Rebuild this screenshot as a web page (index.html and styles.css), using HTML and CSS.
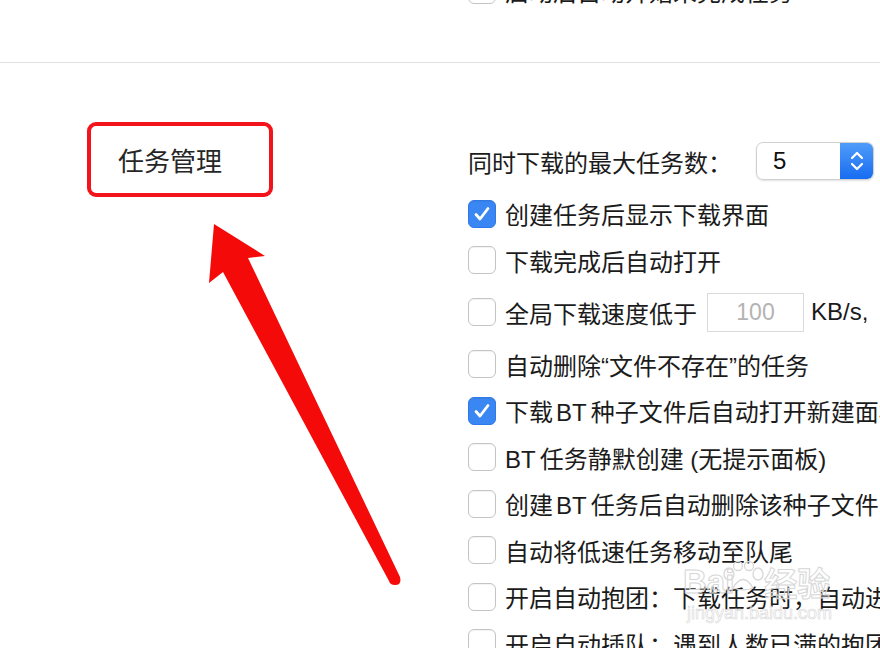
FILE: index.html
```html
<!DOCTYPE html>
<html lang="zh-CN">
<head>
    <meta charset="UTF-8">
    <meta name="viewport" content="width=device-width, initial-scale=1.0">
    <title>偏好设置 - 任务管理</title>
    <link rel="stylesheet" href="styles.css">
</head>
<body>
<div class="prev-section">
    <div class="option cut">
        <span class="check"></span>
        <span>启动后自动开始未完成任务</span>
    </div>
</div>

<div class="section">
    <div class="section-title">任务管理</div>
    <div class="options">
        <div class="option row-max">
            <span class="max-label">同时下载的最大任务数：</span>
            <div class="stepper">
                <span class="stepper-value">5</span>
                <span class="stepper-arrows">
                    <svg width="20" height="26" viewBox="0 0 20 26"><path d="M5 10 L10 5 L15 10 M5 16 L10 21 L15 16" fill="none" stroke="#fff" stroke-width="2.2" stroke-linecap="round" stroke-linejoin="round"/></svg>
                </span>
            </div>
        </div>
        <div class="option">
            <span class="check on"><svg width="26" height="26" viewBox="0 0 26 26"><path d="M7 13.5 L11 18 L19 7.5" fill="none" stroke="#fff" stroke-width="2.8" stroke-linecap="round" stroke-linejoin="round"/></svg></span>
            <span>创建任务后显示下载界面</span>
        </div>
        <div class="option">
            <span class="check"></span>
            <span>下载完成后自动打开</span>
        </div>
        <div class="option row-speed">
            <span class="check"></span>
            <span>全局下载速度低于</span>
            <span class="speed-field">100</span>
            <span>KB/s,</span>
        </div>
        <div class="option">
            <span class="check"></span>
            <span>自动删除“文件不存在”的任务</span>
        </div>
        <div class="option">
            <span class="check on"><svg width="26" height="26" viewBox="0 0 26 26"><path d="M7 13.5 L11 18 L19 7.5" fill="none" stroke="#fff" stroke-width="2.8" stroke-linecap="round" stroke-linejoin="round"/></svg></span>
            <span>下载<span class="latin">BT</span>种子文件后自动打开新建面板</span>
        </div>
        <div class="option">
            <span class="check"></span>
            <span><span class="latin first">BT</span>任务静默创建 (无提示面板)</span>
        </div>
        <div class="option">
            <span class="check"></span>
            <span>创建<span class="latin">BT</span>任务后自动删除该种子文件</span>
        </div>
        <div class="option">
            <span class="check"></span>
            <span>自动将低速任务移动至队尾</span>
        </div>
        <div class="option">
            <span class="check"></span>
            <span>开启自动抱团：下载任务时，自动进入抱团</span>
        </div>
        <div class="option">
            <span class="check"></span>
            <span>开启自动插队：遇到人数已满的抱团时自动插队</span>
        </div>
    </div>
</div>

<!-- annotation arrow pointing at the section title -->
<svg class="arrow" width="880" height="648" viewBox="0 0 880 648">
    <path d="M214 224 L265 256 L248 258 L400 577 Q402 585 395 585 Q390 585 389 581 L223 272 L209 283 Z" fill="#f50a0a"/>
</svg>

<div class="watermark">
    <div class="wm-top">Bai<svg class="paw" width="46" height="30" viewBox="0 0 46 30"><g fill="none" stroke="#d8d8d8" stroke-width="1.3"><ellipse cx="9" cy="13" rx="5" ry="6"/><ellipse cx="18" cy="5" rx="4.5" ry="4.5"/><ellipse cx="29" cy="5" rx="4.5" ry="4.5"/><ellipse cx="38" cy="13" rx="5" ry="6"/><path d="M13 27 Q23 10 33 27 Q23 31 13 27 Z"/></g></svg>经验</div>
    <div class="wm-url">jingyan.baidu.com</div>
</div>
</body>
</html>
```

FILE: styles.css
```css
html, body {
    margin: 0;
    width: 880px;
    height: 648px;
    overflow: hidden;
    background: #fff;
}
body {
    position: relative;
    font-family: "Liberation Sans", "Noto Sans CJK SC", sans-serif;
    color: #1b1b1b;
}
.prev-section {
    height: 62px;
    padding-left: 468px;
    border-bottom: 1px solid #e2e2e2;
    overflow: hidden;
}
.prev-section .option {
    margin-top: -24px;
}
.section {
    display: flex;
    align-items: flex-start;
    padding: 59px 0 0 87px;
    overflow: hidden;
}
.section-title {
    flex: none;
    width: 186px;
    height: 75px;
    box-sizing: border-box;
    border: 4px solid #f2141a;
    border-radius: 9px;
    padding-left: 27px;
    display: flex;
    align-items: center;
    font-size: 26px;
    color: #262626;
    white-space: nowrap;
}
.options {
    flex: none;
    margin: 19px 0 0 195px;
    display: flex;
    flex-direction: column;
    gap: 18.5px;
}
.option {
    display: flex;
    align-items: center;
    gap: 9px;
    height: 28px;
    font-size: 24px;
    white-space: nowrap;
}
.check {
    width: 28px;
    height: 28px;
    flex: none;
    box-sizing: border-box;
    border: 1px solid #c4c4c4;
    border-radius: 6px;
    background: #fff;
    box-shadow: inset 0 1px 1px rgba(0, 0, 0, 0.05);
    display: flex;
    align-items: center;
    justify-content: center;
}
.check.on {
    background: #3a86f2;
    border-color: #3179e6;
}
.latin {
    margin: 0 4px 0 3px;
}
.latin.first {
    margin-left: 0;
}
.row-max {
    height: 40px;
    gap: 0;
}
.max-label {
    width: 288px;
}
.stepper {
    display: flex;
    flex: none;
    width: 118px;
    height: 38px;
    box-sizing: border-box;
    border: 1px solid #d0d0d0;
    border-radius: 7px;
    overflow: hidden;
    box-shadow: 0 1px 2px rgba(0, 0, 0, 0.12);
}
.stepper-value {
    flex: 1;
    padding-left: 16px;
    display: flex;
    align-items: center;
    font-size: 24px;
    color: #111;
}
.stepper-arrows {
    width: 33px;
    background: linear-gradient(#4f9cf9, #186cf1);
    display: flex;
    align-items: center;
    justify-content: center;
}
.row-speed {
    height: 39px;
}
.speed-field {
    flex: none;
    width: 97px;
    height: 39px;
    box-sizing: border-box;
    border: 1px solid #d9d9d9;
    margin: 0 -2px 0 1px;
    display: flex;
    align-items: center;
    justify-content: center;
    color: #b3b3b3;
    font-size: 23px;
}
.arrow {
    position: absolute;
    left: 0;
    top: 0;
    pointer-events: none;
}
.watermark {
    position: absolute;
    left: 683px;
    top: 562px;
    color: rgba(255, 255, 255, 0.35);
    -webkit-text-stroke: 1px #d6d6d6;
    pointer-events: none;
}
.wm-top {
    display: flex;
    align-items: center;
    height: 40px;
    font-size: 33px;
    font-weight: bold;
}
.wm-top .paw {
    margin: -12px -2px 0 -14px;
}
.wm-url {
    margin: 1px 0 0 4px;
    font-size: 18px;
    -webkit-text-stroke: 0.6px #d6d6d6;
}
```
